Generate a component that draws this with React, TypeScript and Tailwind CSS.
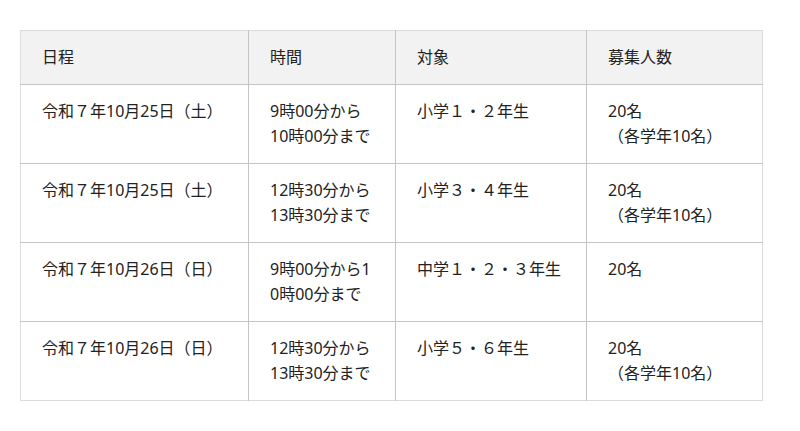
const rows = [
  { date: "令和７年10月25日（土）", time: ["9時00分から", "10時00分まで"], target: "小学１・２年生", cap: ["20名", "（各学年10名）"] },
  { date: "令和７年10月25日（土）", time: ["12時30分から", "13時30分まで"], target: "小学３・４年生", cap: ["20名", "（各学年10名）"] },
  { date: "令和７年10月26日（日）", time: ["9時00分から1", "0時00分まで"], target: "中学１・２・３年生", cap: ["20名"] },
  { date: "令和７年10月26日（日）", time: ["12時30分から", "13時30分まで"], target: "小学５・６年生", cap: ["20名", "（各学年10名）"] },
];

const cell = "px-[21px] py-[14px] align-top leading-[25px] border-[#c4c4c4] whitespace-nowrap";

export default function App() {
  return (
    <div className="min-h-[431px] bg-white pt-[30px] pl-[20px] text-[16px] text-[#222]" style={{ fontFamily: '"Noto Sans", "Noto Sans CJK JP", sans-serif' }}>
      <table className="w-[742px] table-fixed border-collapse border border-[#dcdcdc]">
        <colgroup>
          <col className="w-[228px]" />
          <col className="w-[147px]" />
          <col className="w-[191px]" />
          <col className="w-[176px]" />
        </colgroup>
        <thead>
          <tr className="bg-[#f2f2f2] border-b border-[#c4c4c4]">
            <th className={`${cell} text-left font-normal border-r`}>日程</th>
            <th className={`${cell} text-left font-normal border-r`}>時間</th>
            <th className={`${cell} text-left font-normal border-r`}>対象</th>
            <th className={`${cell} text-left font-normal`}>募集人数</th>
          </tr>
        </thead>
        <tbody>
          {rows.map((r, i) => (
            <tr key={i} className={i < rows.length - 1 ? "border-b border-[#c4c4c4]" : ""}>
              <td className={`${cell} border-r`}>{r.date}</td>
              <td className={`${cell} border-r`}>
                <div className="h-[50px]">
                  {r.time.map((t) => (
                    <div key={t}>{t}</div>
                  ))}
                </div>
              </td>
              <td className={`${cell} border-r`}>{r.target}</td>
              <td className={cell}>
                {r.cap.map((c) => (
                  <div key={c}>{c}</div>
                ))}
              </td>
            </tr>
          ))}
        </tbody>
      </table>
    </div>
  );
}
